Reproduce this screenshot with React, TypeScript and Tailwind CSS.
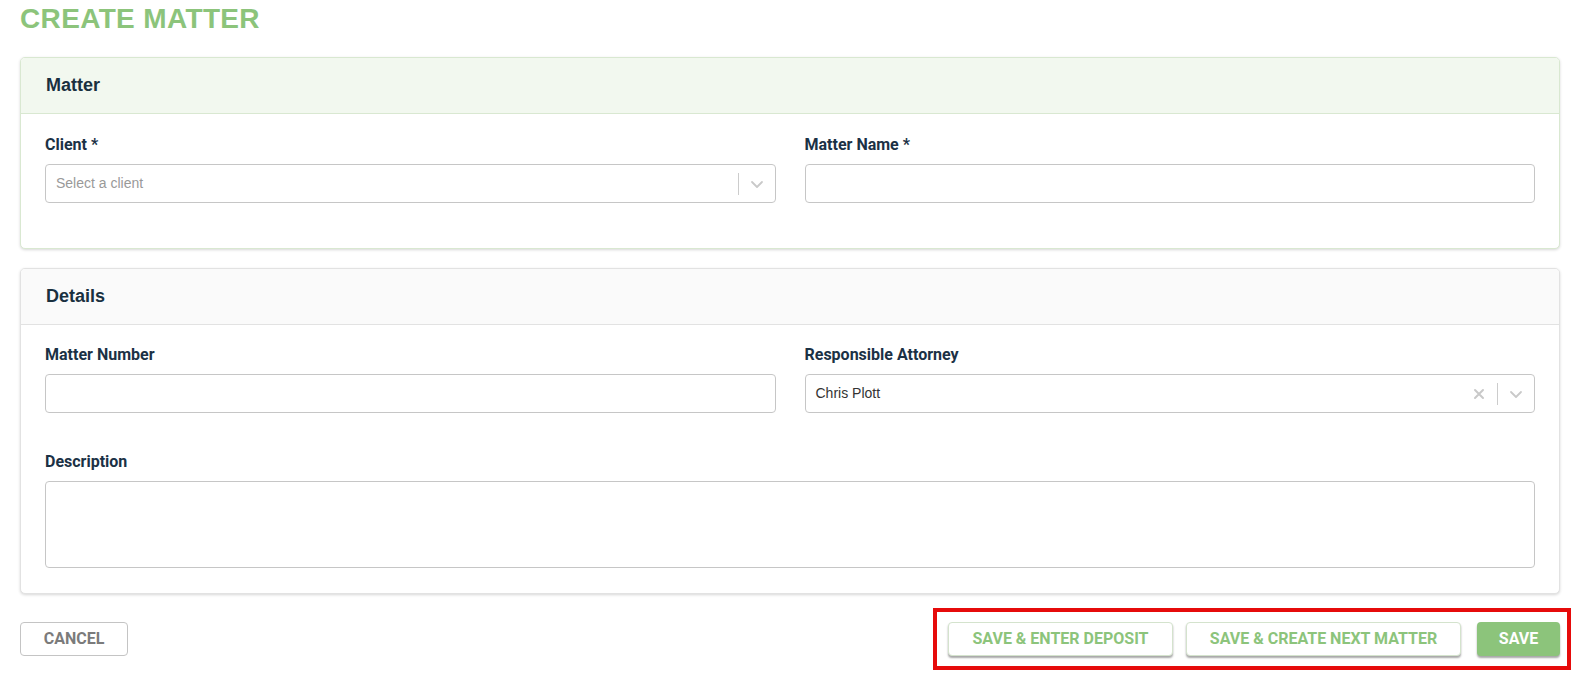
import React from "react";

const roboto = "font-['Roboto',sans-serif]";
const arial = "font-['Liberation_Sans','Arial',sans-serif]";

function Label({ children }: { children: React.ReactNode }) {
  return (
    <div className={`${roboto} text-[16px] font-bold leading-[20px] text-[#1b3145] mb-[9px]`}>
      {children}
    </div>
  );
}

function Chevron() {
  return (
    <svg width="20" height="20" viewBox="0 0 20 20" className="text-[#c9c9c9]">
      <path d="M5 8l5 5 5-5" fill="none" stroke="currentColor" strokeWidth="1.8" strokeLinecap="round" strokeLinejoin="round" />
    </svg>
  );
}

function Cross() {
  return (
    <svg width="20" height="20" viewBox="0 0 20 20" className="text-[#c9c9c9]">
      <path d="M6 6l8 8M14 6l-8 8" fill="none" stroke="currentColor" strokeWidth="2" strokeLinecap="round" />
    </svg>
  );
}

function TextInput() {
  return <div className="h-[39px] rounded-[4px] border border-[#c6c6c6] bg-white" />;
}

function SelectBox({ value, placeholder, clearable }: { value?: string; placeholder?: string; clearable?: boolean }) {
  return (
    <div className="flex h-[39px] items-center rounded-[4px] border border-[#c6c6c6] bg-white">
      <div className={`${arial} flex-1 pl-[10px] text-[14px] ${value ? "text-[#333333]" : "text-[#999999]"}`}>
        {value ?? placeholder}
      </div>
      {clearable && (
        <div className="flex h-full items-center px-[8px]">
          <Cross />
        </div>
      )}
      <div className="h-[22px] w-px bg-[#cccccc]" />
      <div className="flex h-full items-center px-[8px]">
        <Chevron />
      </div>
    </div>
  );
}

function Card({
  title,
  tone,
  children,
}: {
  title: string;
  tone: "green" | "gray";
  children: React.ReactNode;
}) {
  const green = tone === "green";
  return (
    <div
      className={`overflow-hidden rounded-[5px] border bg-white shadow-[0_1px_3px_rgba(0,0,0,0.16)] ${
        green ? "border-[#d9e8d1]" : "border-[#e2e2e2]"
      }`}
    >
      <div
        className={`flex h-[56px] items-center border-b px-[25px] ${
          green ? "border-[#d9e8d1] bg-[#f2f8ef]" : "border-[#e2e2e2] bg-[#fafafa]"
        }`}
      >
        <span className={`${arial} text-[18px] font-bold text-[#19303f]`}>{title}</span>
      </div>
      {children}
    </div>
  );
}

const outlineBtn = `${roboto} h-[34px] rounded-[4px] border border-[#d4e3cd] bg-white text-[16px] font-bold text-[#8cc47b] shadow-[0_2px_2px_rgba(0,0,0,0.35)]`;

export default function App() {
  return (
    <div className="min-h-[678px] bg-white pl-5 pr-[17px] pt-[3px]">
      <h1 className={`${arial} text-[28px] font-bold leading-[32px] tracking-[0.35px] text-[#8cc47b]`}>
        CREATE MATTER
      </h1>

      <div className="mt-[22px]">
        <Card title="Matter" tone="green">
          <div className="grid grid-cols-2 gap-x-[29px] px-[24px] pb-[45px] pt-[21px]">
            <div>
              <Label>Client *</Label>
              <SelectBox placeholder="Select a client" />
            </div>
            <div>
              <Label>Matter Name *</Label>
              <TextInput />
            </div>
          </div>
        </Card>
      </div>

      <div className="mt-[19px]">
        <Card title="Details" tone="gray">
          <div className="px-[24px] pb-[25px] pt-[20px]">
            <div className="grid grid-cols-2 gap-x-[29px]">
              <div>
                <Label>Matter Number</Label>
                <TextInput />
              </div>
              <div>
                <Label>Responsible Attorney</Label>
                <SelectBox value="Chris Plott" clearable />
              </div>
            </div>
            <div className="mt-[39px]">
              <Label>Description</Label>
              <div className="h-[87px] rounded-[4px] border border-[#c6c6c6] bg-white" />
            </div>
          </div>
        </Card>
      </div>

      <div className="mt-[14px] flex items-center justify-between">
        <button
          className={`${roboto} h-[34px] w-[108px] rounded-[4px] border border-[#c4c4c4] bg-white text-[16px] font-bold text-[#7b7b7b]`}
        >
          CANCEL
        </button>

        <div className="mr-[-11px] flex items-center border-[4px] border-[#e60b0b] py-[10px] pl-[11px] pr-[7px]">
          <button className={`${outlineBtn} w-[225px]`}>SAVE &amp; ENTER DEPOSIT</button>
          <button className={`${outlineBtn} ml-[13px] w-[275px]`}>SAVE &amp; CREATE NEXT MATTER</button>
          <button
            className={`${roboto} ml-[16px] h-[34px] w-[83px] rounded-[4px] bg-[#8cc47b] text-[16px] font-bold text-white shadow-[0_2px_2px_rgba(0,0,0,0.35)]`}
          >
            SAVE
          </button>
        </div>
      </div>
    </div>
  );
}
